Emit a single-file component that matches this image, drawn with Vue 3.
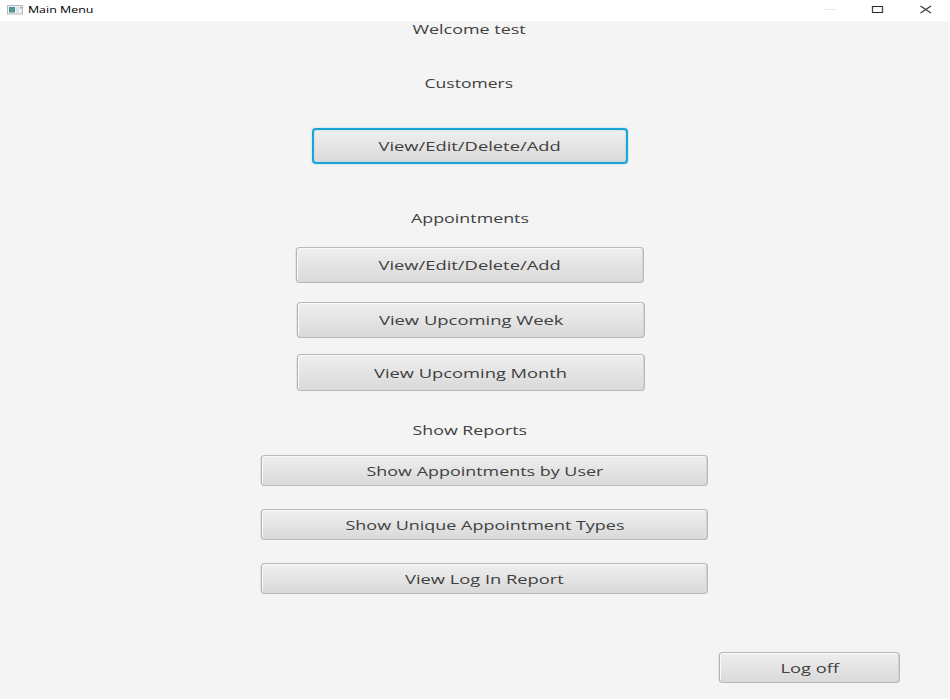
<script setup>
// Stretches a label horizontally so its ink spans the requested width.
const vFit = {
  mounted(el, { value }) {
    el.style.transform = `scaleX(${value / el.offsetWidth})`
  },
}
const appointments = [
  { label: 'View/Edit/Delete/Add', fit: 182, cls: 'first' },
  { label: 'View Upcoming Week', fit: 184, cls: 'second' },
  { label: 'View Upcoming Month', fit: 193, cls: 'third' },
]
const reports = [
  { label: 'Show Appointments by User', fit: 237 },
  { label: 'Show Unique Appointment Types', fit: 279 },
  { label: 'View Log In Report', fit: 159 },
]
</script>

<template>
  <div class="window">
    <header class="titlebar">
      <svg class="app-icon" width="16" height="10" viewBox="0 0 16 10">
        <rect x="0.5" y="0.5" width="15" height="8.5" fill="#eef0f1" stroke="#b3b8bb" />
        <rect x="2" y="2" width="6" height="5.5" fill="#5588a0" />
        <rect x="3" y="3" width="4" height="4" fill="#4c9c87" />
        <rect x="9" y="2" width="3" height="6" fill="#dde2e4" />
        <rect x="13" y="2" width="1.5" height="1.5" fill="#64a5bb" />
      </svg>
      <div class="title"><span v-fit="65" class="fit">Main Menu</span></div>
      <svg class="controls" width="110" height="20" viewBox="0 0 110 20">
        <path d="M0 9.5h11" stroke="#e6e6e6" />
        <path d="M47 6.5h11M47 12.5h11" stroke="#222" />
        <path d="M47.5 6v7M57.5 6v7" stroke="#444" stroke-width="1.3" />
        <path d="M95.5 6l10.5 7M106 6l-10.5 7" stroke="#333" stroke-width="1.1" />
      </svg>
    </header>
    <main class="content">
      <h1 class="heading welcome"><span v-fit="113" class="fit">Welcome test</span></h1>
      <h2 class="heading customers"><span v-fit="89" class="fit">Customers</span></h2>
      <button class="btn focused"><span v-fit="182" class="fit">View/Edit/Delete/Add</span></button>
      <h2 class="heading appts"><span v-fit="118" class="fit">Appointments</span></h2>
      <button v-for="b in appointments" :key="b.label" class="btn wide" :class="b.cls">
        <span v-fit="b.fit" class="fit">{{ b.label }}</span>
      </button>
      <h2 class="heading reports-title"><span v-fit="115" class="fit">Show Reports</span></h2>
      <section class="reports">
        <button v-for="b in reports" :key="b.label" class="btn report">
          <span v-fit="b.fit" class="fit">{{ b.label }}</span>
        </button>
      </section>
      <button class="btn logoff"><span v-fit="59" class="fit">Log off</span></button>
    </main>
  </div>
</template>

<style>
body { background: #fff; overflow: hidden; }
</style>

<style scoped>
.window {
  width: 950px;
  height: 700px;
  box-sizing: border-box;
  display: flex;
  flex-direction: column;
  background: #fff;
  font-family: "Open Sans", "Noto Sans", sans-serif;
  color: #404040;
}
.titlebar {
  height: 21px;
  flex: none;
  display: flex;
  align-items: flex-start;
}
.app-icon { margin: 5px 0 0 7px; }
.title {
  width: 76px;
  text-align: center;
  font-size: 9px;
  line-height: 20px;
  color: #000;
  white-space: nowrap;
}
.controls { margin-left: auto; margin-right: 15px; }
.content {
  width: 949px;
  height: 678px;
  background: #f4f4f4;
  display: flex;
  flex-direction: column;
}
.fit { display: inline-block; white-space: nowrap; }
.heading {
  margin: 0;
  width: 938px;
  height: 20px;
  line-height: 20px;
  font-size: 13px;
  font-weight: 400;
  text-align: center;
}
.welcome { margin-top: -2px; }
.customers { margin-top: 34px; }
.appts { margin-top: 44px; width: 939px; }
.reports-title { margin-top: 29px; width: 940px; }
.btn {
  flex: none;
  box-sizing: border-box;
  display: flex;
  align-items: center;
  justify-content: center;
  padding: 0;
  border: 1px solid #b9b9b9;
  border-left-color: #b4b4b4;
  border-radius: 4px;
  background: linear-gradient(#efefef, #d9d9d9);
  box-shadow: inset 1px 1px 0 #fafafa, inset -1px 0 0 #d2d2d2, -0.5px 0 0 #cfcfcf;
  color: #404040;
  font-family: inherit;
  font-size: 13px;
  line-height: 20px;
}
.focused {
  margin: 35px 0 0 312px;
  width: 316px;
  height: 36px;
  border: 2px solid #1ba3d6;
  box-shadow: 0 0 2px #8fd3ec, inset 0 0 2px #9fcfe0;
}
.wide { width: 348px; height: 36px; }
.first { margin: 19px 0 0 296px; }
.second { margin: 19px 0 0 297px; }
.third { margin: 16px 0 0 297px; height: 37px; }
.reports {
  margin: 15px 0 0 261px;
  display: flex;
  flex-direction: column;
  gap: 23px;
}
.report { width: 447px; height: 31px; }
.logoff { width: 181px; height: 31px; margin: 58px 0 0 719px; }
</style>
